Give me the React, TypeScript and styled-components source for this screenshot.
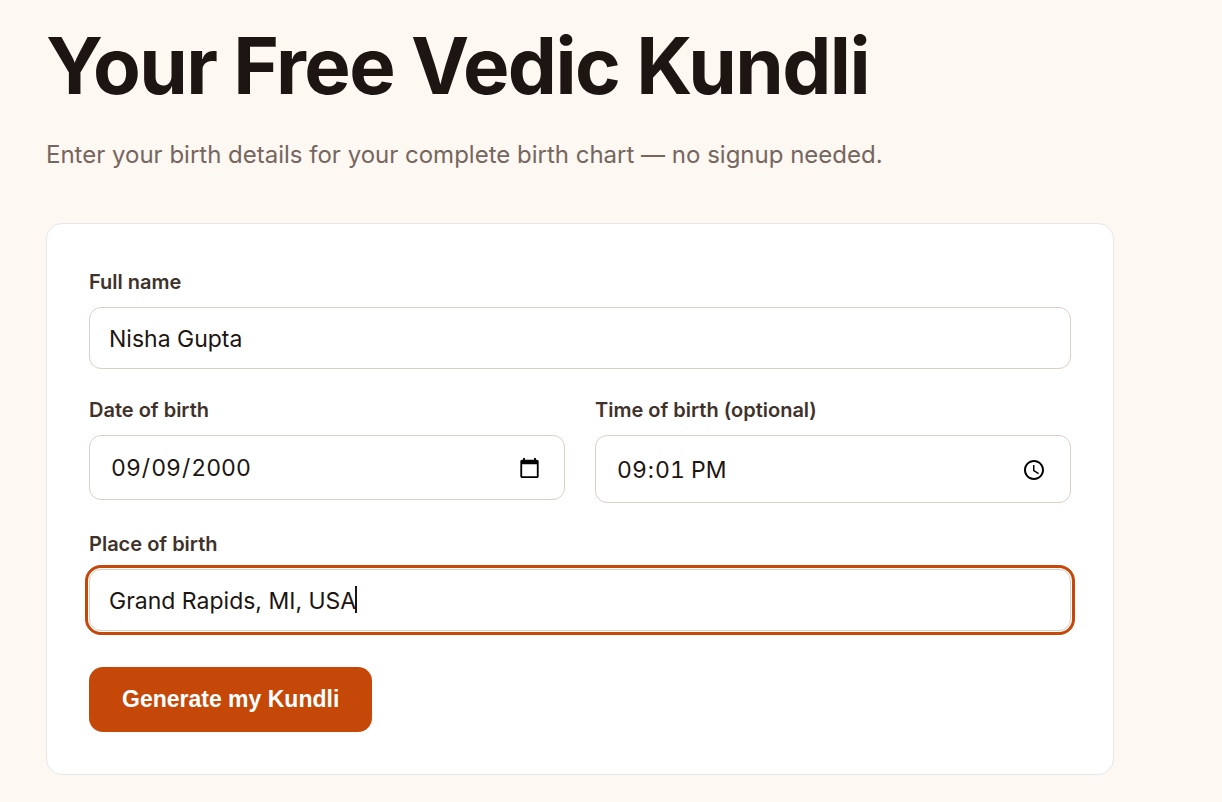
import React, { useEffect, useRef, useState } from "react";
import styled, { createGlobalStyle } from "styled-components";

const GlobalStyle = createGlobalStyle`
  *, *::before, *::after { box-sizing: border-box; }
  body {
    margin: 0;
    background: #fdf8f2;
    color: #1c1512;
    font-family: Inter, "Liberation Sans", sans-serif;
  }
`;

const Page = styled.main`
  max-width: 1160px;
  padding: 20px 46px 28px;
`;

const Title = styled.h1`
  margin: 0;
  font-size: 78px;
  line-height: 92px;
  font-weight: 700;
  letter-spacing: -0.02em;
`;

const Lead = styled.p`
  margin: 24px 0 0;
  font-size: 24px;
  line-height: 38px;
  color: #766660;
`;

const Card = styled.form`
  display: flex;
  flex-direction: column;
  gap: 25px;
  margin-top: 49px;
  padding: 42px;
  background: #ffffff;
  border: 1px solid #e5e7eb;
  border-radius: 16px;
`;

const Row = styled.div`
  display: grid;
  grid-template-columns: 1fr 1fr;
  align-items: start;
  gap: 30px;
`;

const Field = styled.div`
  display: flex;
  flex-direction: column;
  gap: 9px;
`;

const Label = styled.label`
  font-size: 20px;
  line-height: 32px;
  font-weight: 600;
  color: #40322b;
`;

const Input = styled.input`
  width: 100%;
  padding: 17px 19px 15px;
  border: 1px solid #dccfc5;
  border-radius: 12px;
  background: #ffffff;
  color: #1c1512;
  font-family: inherit;
  font-size: 23px;

  &:focus {
    outline: 3px solid #c54808;
    outline-offset: 1px;
  }
`;

const PickerInput = styled(Input)<{ $tall?: boolean }>`
  padding: ${(p) => (p.$tall ? "19px 21px 17px 20px" : "17px 21px 16px 20px")};
  font-variant-numeric: tabular-nums;
`;

const CaretBox = styled.div`
  position: relative;
  display: flex;

  & > input {
    caret-color: transparent;
  }
  & > input:not(:focus) + span {
    display: none;
  }
`;

const Caret = styled.span`
  position: absolute;
  top: 17px;
  width: 2px;
  height: 27px;
  background: #1c1512;
  pointer-events: none;
`;

const Submit = styled.button`
  align-self: flex-start;
  margin-top: 11px;
  padding: 19px 33px;
  border: 0;
  border-radius: 14px;
  background: #c54808;
  color: #ffffff;
  font-family: "Liberation Sans", Arial, sans-serif;
  font-size: 23px;
  line-height: 27px;
  font-weight: 700;
  cursor: pointer;
`;

function PlaceInput() {
  const ref = useRef<HTMLInputElement>(null);
  const [value, setValue] = useState("Grand Rapids, MI, USA");
  const [caretX, setCaretX] = useState(0);

  const placeCaret = () => {
    const el = ref.current;
    const ctx = document.createElement("canvas").getContext("2d");
    if (!el || !ctx) return;
    const style = getComputedStyle(el);
    ctx.font = `${style.fontSize} ${style.fontFamily}`;
    const before = el.value.slice(0, el.selectionEnd ?? el.value.length);
    setCaretX(Math.round(parseFloat(style.paddingLeft) + ctx.measureText(before).width - el.scrollLeft));
  };

  useEffect(() => {
    const el = ref.current;
    if (!el) return;
    el.focus();
    el.setSelectionRange(el.value.length, el.value.length);
    placeCaret();
  }, []);

  return (
    <CaretBox>
      <Input
        id="place"
        ref={ref}
        type="text"
        value={value}
        onChange={(e) => setValue(e.target.value)}
        onSelect={placeCaret}
      />
      <Caret style={{ left: caretX }} />
    </CaretBox>
  );
}

export default function App() {
  return (
    <>
      <GlobalStyle />
      <Page>
        <Title>Your Free Vedic Kundli</Title>
        <Lead>Enter your birth details for your complete birth chart — no signup needed.</Lead>
        <Card onSubmit={(e) => e.preventDefault()}>
          <Field>
            <Label htmlFor="name">Full name</Label>
            <Input id="name" type="text" defaultValue="Nisha Gupta" />
          </Field>
          <Row>
            <Field>
              <Label htmlFor="date">Date of birth</Label>
              <PickerInput id="date" type="date" defaultValue="2000-09-09" />
            </Field>
            <Field>
              <Label htmlFor="time">Time of birth (optional)</Label>
              <PickerInput id="time" type="time" defaultValue="21:01" $tall />
            </Field>
          </Row>
          <Field>
            <Label htmlFor="place">Place of birth</Label>
            <PlaceInput />
          </Field>
          <Submit type="submit">Generate my Kundli</Submit>
        </Card>
      </Page>
    </>
  );
}
